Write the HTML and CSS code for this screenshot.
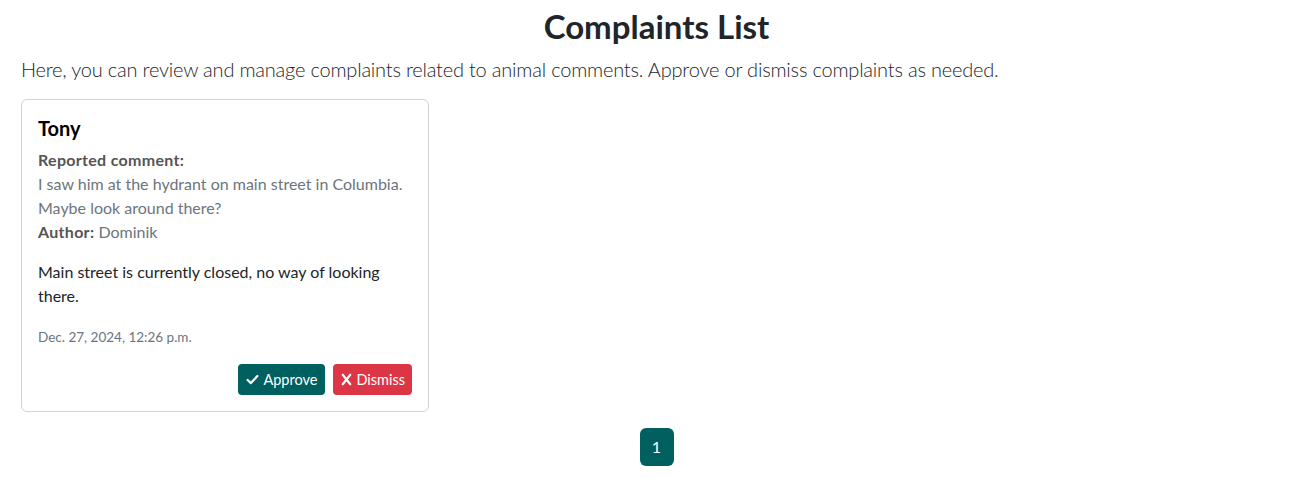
FILE: index.html
```html
<!DOCTYPE html>
<html lang="en">
<head>
<meta charset="utf-8">
<title>Complaints List</title>
<link rel="stylesheet" href="styles.css">
</head>
<body>
<main class="container">
  <h2 class="page-title">Complaints List</h2>
  <p class="lead">Here, you can review and manage complaints related to animal comments. Approve or dismiss complaints as needed.</p>
  <div class="card-grid">
    <div class="card">
      <h5 class="card-title">Tony</h5>
      <p class="reported">
        <strong>Reported comment:</strong><br>
        I saw him at the hydrant on main street in Columbia. Maybe look around there?<br>
        <strong>Author:</strong> Dominik
      </p>
      <p class="complaint">Main street is currently closed, no way of looking there.</p>
      <p class="date"><small>Dec. 27, 2024, 12:26 p.m.</small></p>
      <div class="actions">
        <button class="btn btn-approve"><svg class="icon" viewBox="0 0 16 16" width="13" height="13"><path d="M2 8.6 L6 12.4 L14 3.8" fill="none" stroke="currentColor" stroke-width="2.8" stroke-linecap="round" stroke-linejoin="round"/></svg>Approve</button>
        <button class="btn btn-dismiss"><svg class="icon" viewBox="0 0 14 16" width="11" height="13"><path d="M2.2 2 L11.8 14 M11.8 2 L2.2 14" fill="none" stroke="currentColor" stroke-width="2.8" stroke-linecap="round"/></svg>Dismiss</button>
      </div>
    </div>
  </div>
  <nav class="pagination">
    <span class="page-link">1</span>
  </nav>
</main>
</body>
</html>
```
FILE: styles.css
```css
* { box-sizing: border-box; }
body {
  margin: 0;
  font-family: "Lato", "Noto Sans", sans-serif;
  color: #212529;
  background: #fff;
  font-size: 16px;
  line-height: 1.5;
}
.container {
  padding: 0 21px;
}
.page-title {
  margin: 7px 0 7px;
  text-align: center;
  font-size: 33px;
  font-weight: 700;
  line-height: 1.2;
}
.lead {
  margin: 0 0 15px;
  font-size: 20px;
  font-weight: 300;
  letter-spacing: -0.2px;
  line-height: 1.5;
}
.card-grid {
  display: flex;
}
.card {
  width: 408px;
  border: 1px solid #d3d3d3;
  border-radius: 6px;
  padding: 16px;
}
.card-title {
  margin: 0 0 8px;
  font-size: 20px;
  font-weight: 700;
  line-height: 1.2;
  color: #000;
}
.reported {
  margin: 0 0 16px;
  color: #6c757d;
}
.reported strong {
  color: #555;
  font-weight: 700;
  letter-spacing: 0.3px;
}
.complaint {
  margin: 0 0 16px;
}
.date {
  margin: 0 0 16px;
  color: #6c757d;
}
.date small {
  font-size: 13.5px;
}
.actions {
  display: flex;
  justify-content: flex-end;
  gap: 8px;
}
.btn {
  display: inline-flex;
  align-items: center;
  gap: 4px;
  height: 31px;
  padding: 0 8px;
  border: none;
  border-radius: 4px;
  color: #fff;
  font-family: inherit;
  font-size: 14.5px;
}
.btn-approve { background: #005f5f; }
.btn-dismiss { background: #dc3545; padding-right: 7px; }
.icon { display: block; }
.pagination {
  display: flex;
  justify-content: center;
  margin-top: 16px;
}
.page-link {
  display: block;
  width: 34px;
  height: 38px;
  line-height: 38px;
  text-align: center;
  background: #005f5f;
  color: #fff;
  border-radius: 6px;
  font-size: 16px;
}
```
